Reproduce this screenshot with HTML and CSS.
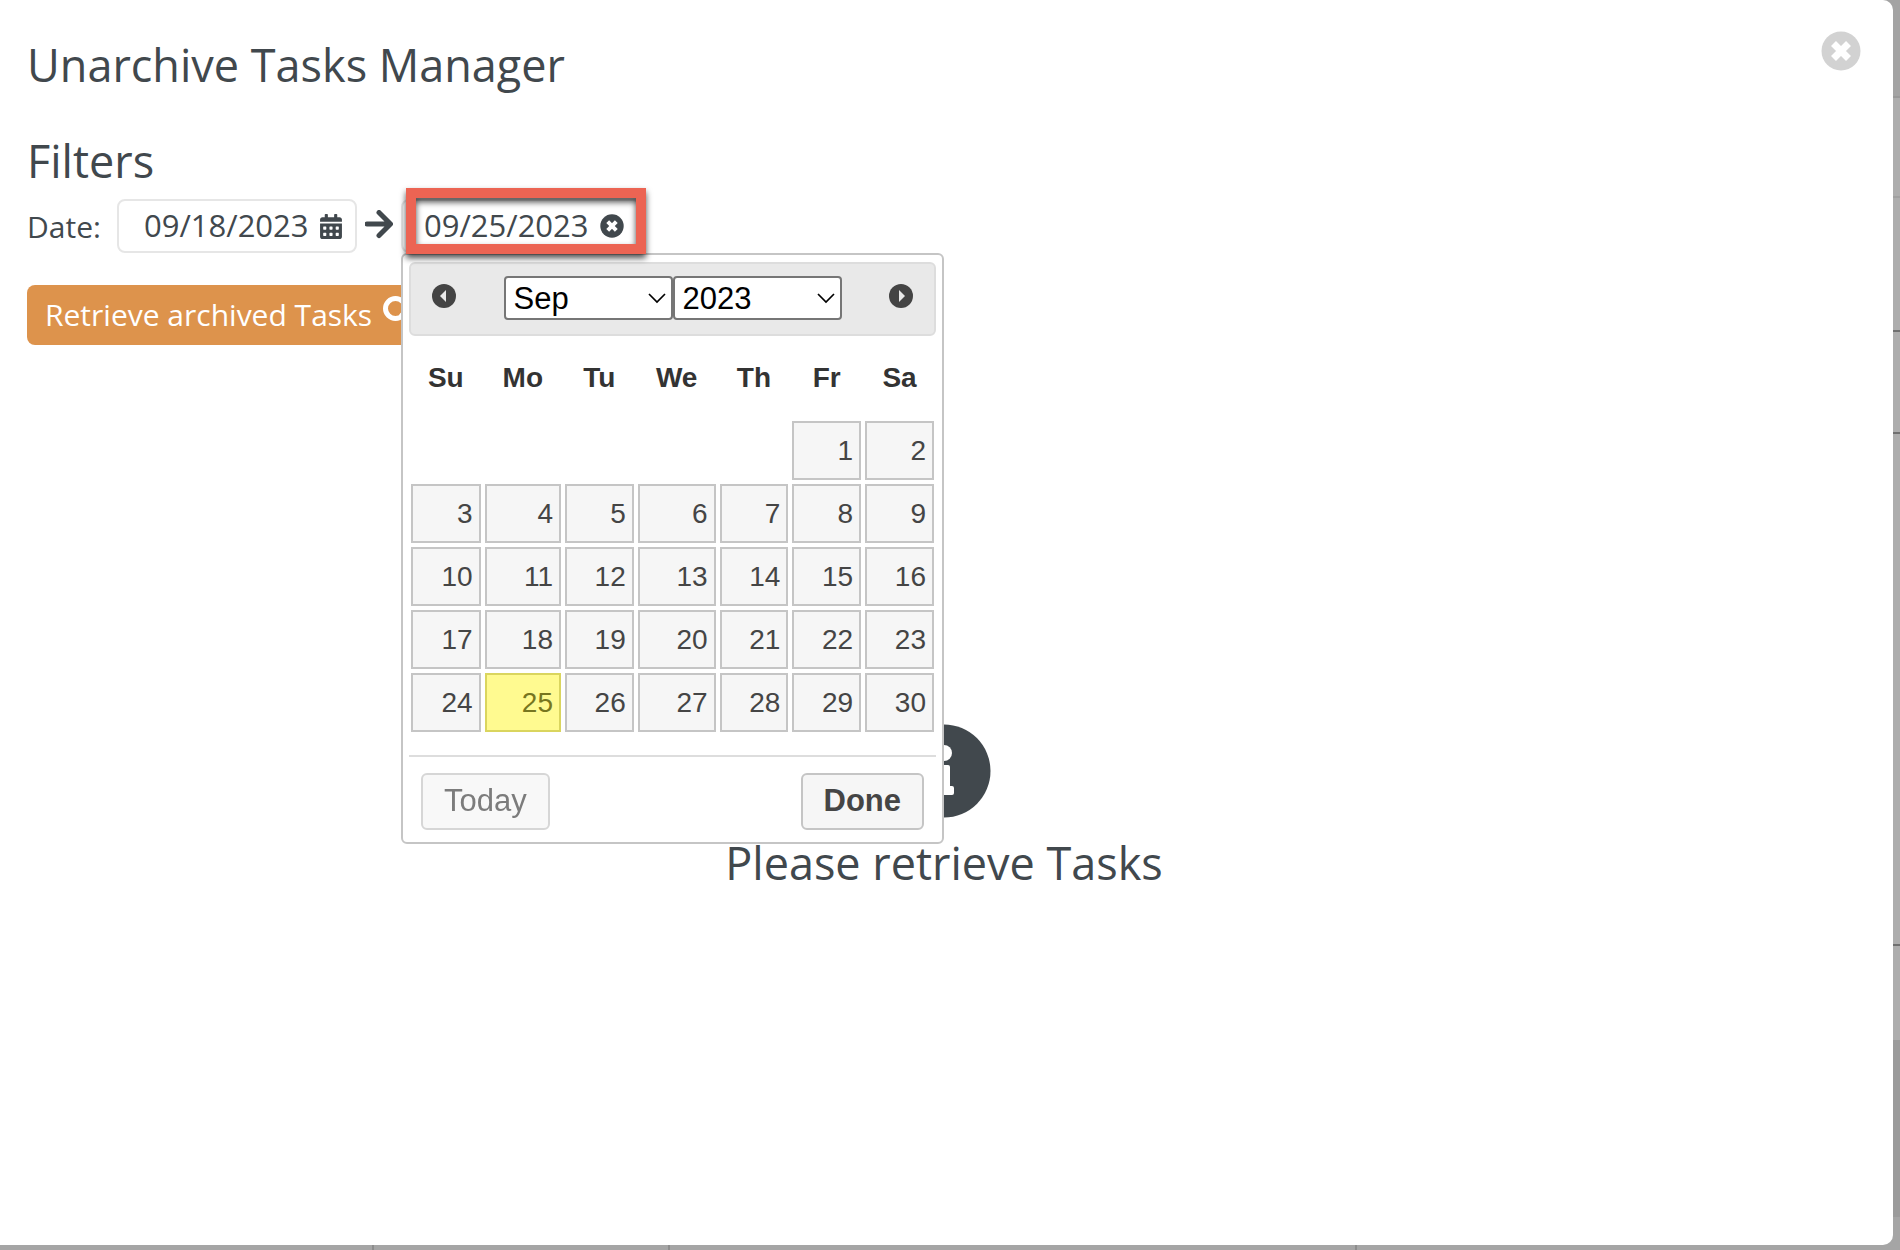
FILE: index.html
```html
<!DOCTYPE html>
<html lang="en">
<head>
    <meta charset="UTF-8">
    <meta name="viewport" content="width=device-width, initial-scale=1.0">
    <title>Unarchive Tasks Manager</title>
    <link rel="stylesheet" href="styles.css">
</head>
<body>
    <main class="modal">
        <header class="modal-header">
            <h1>Unarchive Tasks Manager</h1>
            <button type="button" class="close" aria-label="Close">
                <svg viewBox="0 0 40 40" width="40" height="40">
                    <circle cx="20" cy="20" r="19.5" fill="#d2d2d2"/>
                    <path d="M12.5 12.5l15 15M27.5 12.5l-15 15" stroke="#fff" stroke-width="7"/>
                </svg>
            </button>
        </header>

        <h2>Filters</h2>
        <div class="filters">
            <label for="dateFrom">Date:</label>
            <div class="date-field">
                <input type="text" id="dateFrom" value="09/18/2023">
                <svg class="calendar-icon" viewBox="0 0 448 512" width="22" height="25">
                    <path fill="#41484d" d="M0 464c0 26.500 21.500 48 48 48h352c26.500 0 48-21.500 48-48V192H0v272zm320-196c0-6.600 5.400-12 12-12h40c6.600 0 12 5.400 12 12v40c0 6.600-5.400 12-12 12h-40c-6.600 0-12-5.400-12-12v-40zm0 128c0-6.600 5.400-12 12-12h40c6.600 0 12 5.400 12 12v40c0 6.600-5.400 12-12 12h-40c-6.600 0-12-5.400-12-12v-40zM192 268c0-6.600 5.400-12 12-12h40c6.600 0 12 5.400 12 12v40c0 6.600-5.400 12-12 12h-40c-6.600 0-12-5.400-12-12v-40zm0 128c0-6.600 5.400-12 12-12h40c6.600 0 12 5.400 12 12v40c0 6.600-5.400 12-12 12h-40c-6.600 0-12-5.400-12-12v-40zM64 268c0-6.600 5.400-12 12-12h40c6.600 0 12 5.400 12 12v40c0 6.600-5.400 12-12 12H76c-6.600 0-12-5.400-12-12v-40zm0 128c0-6.600 5.400-12 12-12h40c6.600 0 12 5.400 12 12v40c0 6.600-5.400 12-12 12H76c-6.600 0-12-5.400-12-12v-40zM400 64h-48V16c0-8.800-7.200-16-16-16h-32c-8.800 0-16 7.200-16 16v48H160V16c0-8.800-7.200-16-16-16h-32c-8.800 0-16 7.200-16 16v48H48C21.500 64 0 85.500 0 112v48h448v-48c0-26.500-21.500-48-48-48z"/>
                </svg>
            </div>
            <svg class="arrow" viewBox="0 0 28 32" width="28" height="32">
                <path d="M2 14h23M14 2.500L25.500 14 14 25.500" fill="none" stroke="#41484d" stroke-width="5" stroke-linecap="round" stroke-linejoin="round"/>
            </svg>
            <div class="date-field date-to">
                <input type="text" id="dateTo" value="09/25/2023" aria-label="End date">
                <button type="button" class="clear" aria-label="Clear date">
                    <svg viewBox="0 0 24 24" width="24" height="24">
                        <circle cx="12" cy="12" r="11.700" fill="#41484d"/>
                        <path d="M7.700 7.700l8.600 8.600M16.300 7.700l-8.600 8.600" stroke="#fff" stroke-width="4"/>
                    </svg>
                </button>

                <div class="datepicker">
                    <div class="picker-header">
                        <button type="button" aria-label="Prev">
                            <svg viewBox="0 0 24 24" width="24" height="24">
                                <circle cx="12" cy="12" r="12" fill="#444"/>
                                <path d="M14 6v12l-6-6z" fill="#e9e9e9"/>
                            </svg>
                        </button>
                        <div class="selects">
                            <div class="select">
                                <select aria-label="Month">
                                    <option>Sep</option>
                                </select>
                                <svg viewBox="0 0 18 12" width="18" height="12"><path d="M1 1l8 8 8-8" fill="none" stroke="#000" stroke-width="1.700"/></svg>
                            </div>
                            <div class="select">
                                <select aria-label="Year">
                                    <option>2023</option>
                                </select>
                                <svg viewBox="0 0 18 12" width="18" height="12"><path d="M1 1l8 8 8-8" fill="none" stroke="#000" stroke-width="1.700"/></svg>
                            </div>
                        </div>
                        <button type="button" aria-label="Next">
                            <svg viewBox="0 0 24 24" width="24" height="24">
                                <circle cx="12" cy="12" r="12" fill="#444"/>
                                <path d="M10 6v12l6-6z" fill="#e9e9e9"/>
                            </svg>
                        </button>
                    </div>
                    <table>
                        <thead>
                            <tr><th>Su</th><th>Mo</th><th>Tu</th><th>We</th><th>Th</th><th>Fr</th><th>Sa</th></tr>
                        </thead>
                        <tbody>
                            <tr><td></td><td></td><td></td><td></td><td></td><td><a href="#">1</a></td><td><a href="#">2</a></td></tr>
                            <tr><td><a href="#">3</a></td><td><a href="#">4</a></td><td><a href="#">5</a></td><td><a href="#">6</a></td><td><a href="#">7</a></td><td><a href="#">8</a></td><td><a href="#">9</a></td></tr>
                            <tr><td><a href="#">10</a></td><td><a href="#">11</a></td><td><a href="#">12</a></td><td><a href="#">13</a></td><td><a href="#">14</a></td><td><a href="#">15</a></td><td><a href="#">16</a></td></tr>
                            <tr><td><a href="#">17</a></td><td><a href="#">18</a></td><td><a href="#">19</a></td><td><a href="#">20</a></td><td><a href="#">21</a></td><td><a href="#">22</a></td><td><a href="#">23</a></td></tr>
                            <tr><td><a href="#">24</a></td><td><a href="#" class="selected">25</a></td><td><a href="#">26</a></td><td><a href="#">27</a></td><td><a href="#">28</a></td><td><a href="#">29</a></td><td><a href="#">30</a></td></tr>
                        </tbody>
                    </table>
                    <div class="picker-buttons">
                        <button type="button" class="today">Today</button>
                        <button type="button" class="done">Done</button>
                    </div>
                </div>
                <div class="highlight"></div>
            </div>
        </div>

        <button type="button" class="retrieve">
            Retrieve archived Tasks
            <svg viewBox="0 0 30 36" width="30" height="36">
                <path d="M19 19l9 9" stroke="#fff" stroke-width="5" stroke-linecap="round"/>
                <circle cx="12.500" cy="12.500" r="10" fill="none" stroke="#fff" stroke-width="5"/>
            </svg>
        </button>

        <section class="message">
            <svg viewBox="0 0 94 94" width="94" height="94">
                <circle cx="47" cy="47" r="46.500" fill="#41484d"/>
                <circle cx="47" cy="29" r="8" fill="#fff"/>
                <path d="M37 41h14a2 2 0 0 1 2 2v19h2a2 2 0 0 1 2 2v5a2 2 0 0 1-2 2H37v-9h4V50h-4z" fill="#fff"/>
            </svg>
            <p>Please retrieve Tasks</p>
        </section>
    </main>
</body>
</html>
```
FILE: styles.css
```css
* {
    box-sizing: border-box;
}

body {
    margin: 0;
    padding: 0 7px 5px 0;
    min-height: 100vh;
    display: flex;
    font-family: "Open Sans", "Liberation Sans", sans-serif;
    font-size: 30px;
    color: #41484d;
    /* dimmed page behind the modal */
    background:
        linear-gradient(#8d8d8d, #8d8d8d) 372px 100% / 2px 5px no-repeat,
        linear-gradient(#8d8d8d, #8d8d8d) 668px 100% / 2px 5px no-repeat,
        linear-gradient(#8d8d8d, #8d8d8d) 1355px 100% / 2px 5px no-repeat,
        linear-gradient(#a3a3a3 96px, #999 96px, #999 98px, #adadad 98px, #adadad 196px, #a0a0a0 196px, #a0a0a0 198px, #adadad 198px, #adadad 330px, #707070 330px, #707070 332px, #adadad 332px, #adadad 432px, #707070 432px, #707070 434px, #adadad 434px, #adadad 944px, #707070 944px, #707070 946px, #adadad 946px, #adadad 1040px, #9b9b9b 1040px, #9b9b9b 1217px, #a5a5a5 1217px);
}

button {
    border: none;
    padding: 0;
    background: none;
    font: inherit;
    color: inherit;
    cursor: pointer;
}

svg {
    display: block;
    flex: none;
}

.modal {
    flex: 1;
    padding: 30px 32px 32px 27px;
    background: #fff;
    border-radius: 0 10px 10px 0;
}

.modal-header {
    display: flex;
    justify-content: space-between;
    align-items: flex-start;
}

h1, h2 {
    margin: 0;
    font-size: 45px;
    font-weight: 400;
    line-height: 70px;
}

h2 {
    margin-top: 26px;
}

.close {
    margin-top: 1px;
}

.filters {
    display: flex;
    align-items: center;
    margin-top: 3px;
}

.filters label {
    width: 90px;
}

.date-field {
    position: relative;
    display: flex;
    align-items: center;
    width: 240px;
    height: 54px;
    padding-left: 25px;
    border: 2px solid #e6e6e6;
    border-radius: 8px;
}

.date-field input {
    width: 176px;
    padding: 0 0 2px;
    border: none;
    outline: none;
    background: none;
    font: inherit;
    font-size: 31px;
    color: inherit;
}

.arrow {
    margin-left: 8px;
}

.date-to {
    margin-left: 8px;
    padding-left: 21px;
}

.datepicker {
    position: absolute;
    top: 52px;
    left: -2px;
    z-index: 1;
    width: 543px;
    padding: 7px 6px 12px;
    border: 2px solid #c5c5c5;
    border-radius: 6px;
    background: #fff;
    font-family: "Liberation Sans", sans-serif;
    font-size: 31px;
    color: #333;
}

.picker-header {
    display: flex;
    justify-content: space-between;
    align-items: center;
    height: 74px;
    padding: 0 21px 2px;
    border: 2px solid #ddd;
    border-radius: 6px;
    background: #e9e9e9;
}

.picker-header button {
    margin-bottom: 4px;
}

.selects {
    display: flex;
}

.select {
    position: relative;
}

.select select {
    width: 169px;
    height: 44px;
    padding: 0 8px;
    border: 2px solid #767676;
    border-radius: 4px;
    appearance: none;
    background: #fff;
    font: inherit;
    color: #000;
}

.select svg {
    position: absolute;
    top: 17px;
    right: 7px;
}

table {
    width: 100%;
    border-collapse: collapse;
    font-size: 28px;
}

th {
    height: 83px;
    padding: 0 8px;
}

td {
    padding: 2px;
}

td a {
    display: block;
    padding: 0 6px;
    border: 2px solid #c5c5c5;
    background: #f6f6f6;
    color: #454545;
    line-height: 55px;
    text-align: right;
    text-decoration: none;
}

td .selected {
    border-color: #dad55e;
    background: #fffa90;
    color: #777620;
}

.picker-buttons {
    display: flex;
    justify-content: space-between;
    margin-top: 21px;
    padding: 16px 12px 0;
    border-top: 2px solid #ddd;
}

.picker-buttons button {
    height: 57px;
    padding: 0 21px 2px;
    border: 2px solid #c5c5c5;
    border-radius: 6px;
    background: #f6f6f6;
    color: #454545;
}

.picker-buttons .today {
    opacity: 0.7;
}

.picker-buttons .done {
    font-weight: bold;
}

/* red frame round the end date */
.highlight {
    position: absolute;
    top: -13px;
    left: 3px;
    z-index: 2;
    width: 240px;
    height: 66px;
    border: 10px solid #ec6453;
    filter: drop-shadow(0 4px 3px rgba(0, 0, 0, 0.7));
    pointer-events: none;
}

.retrieve {
    display: flex;
    align-items: center;
    gap: 11px;
    height: 60px;
    margin-top: 32px;
    padding: 0 18px 2px;
    border-radius: 8px;
    background: #dd934c;
    color: #fff;
}

.message {
    display: flex;
    flex-direction: column;
    align-items: center;
    margin-top: 379px;
}

.message p {
    margin: 10px 0 0;
    font-size: 45px;
    line-height: 70px;
}
```
